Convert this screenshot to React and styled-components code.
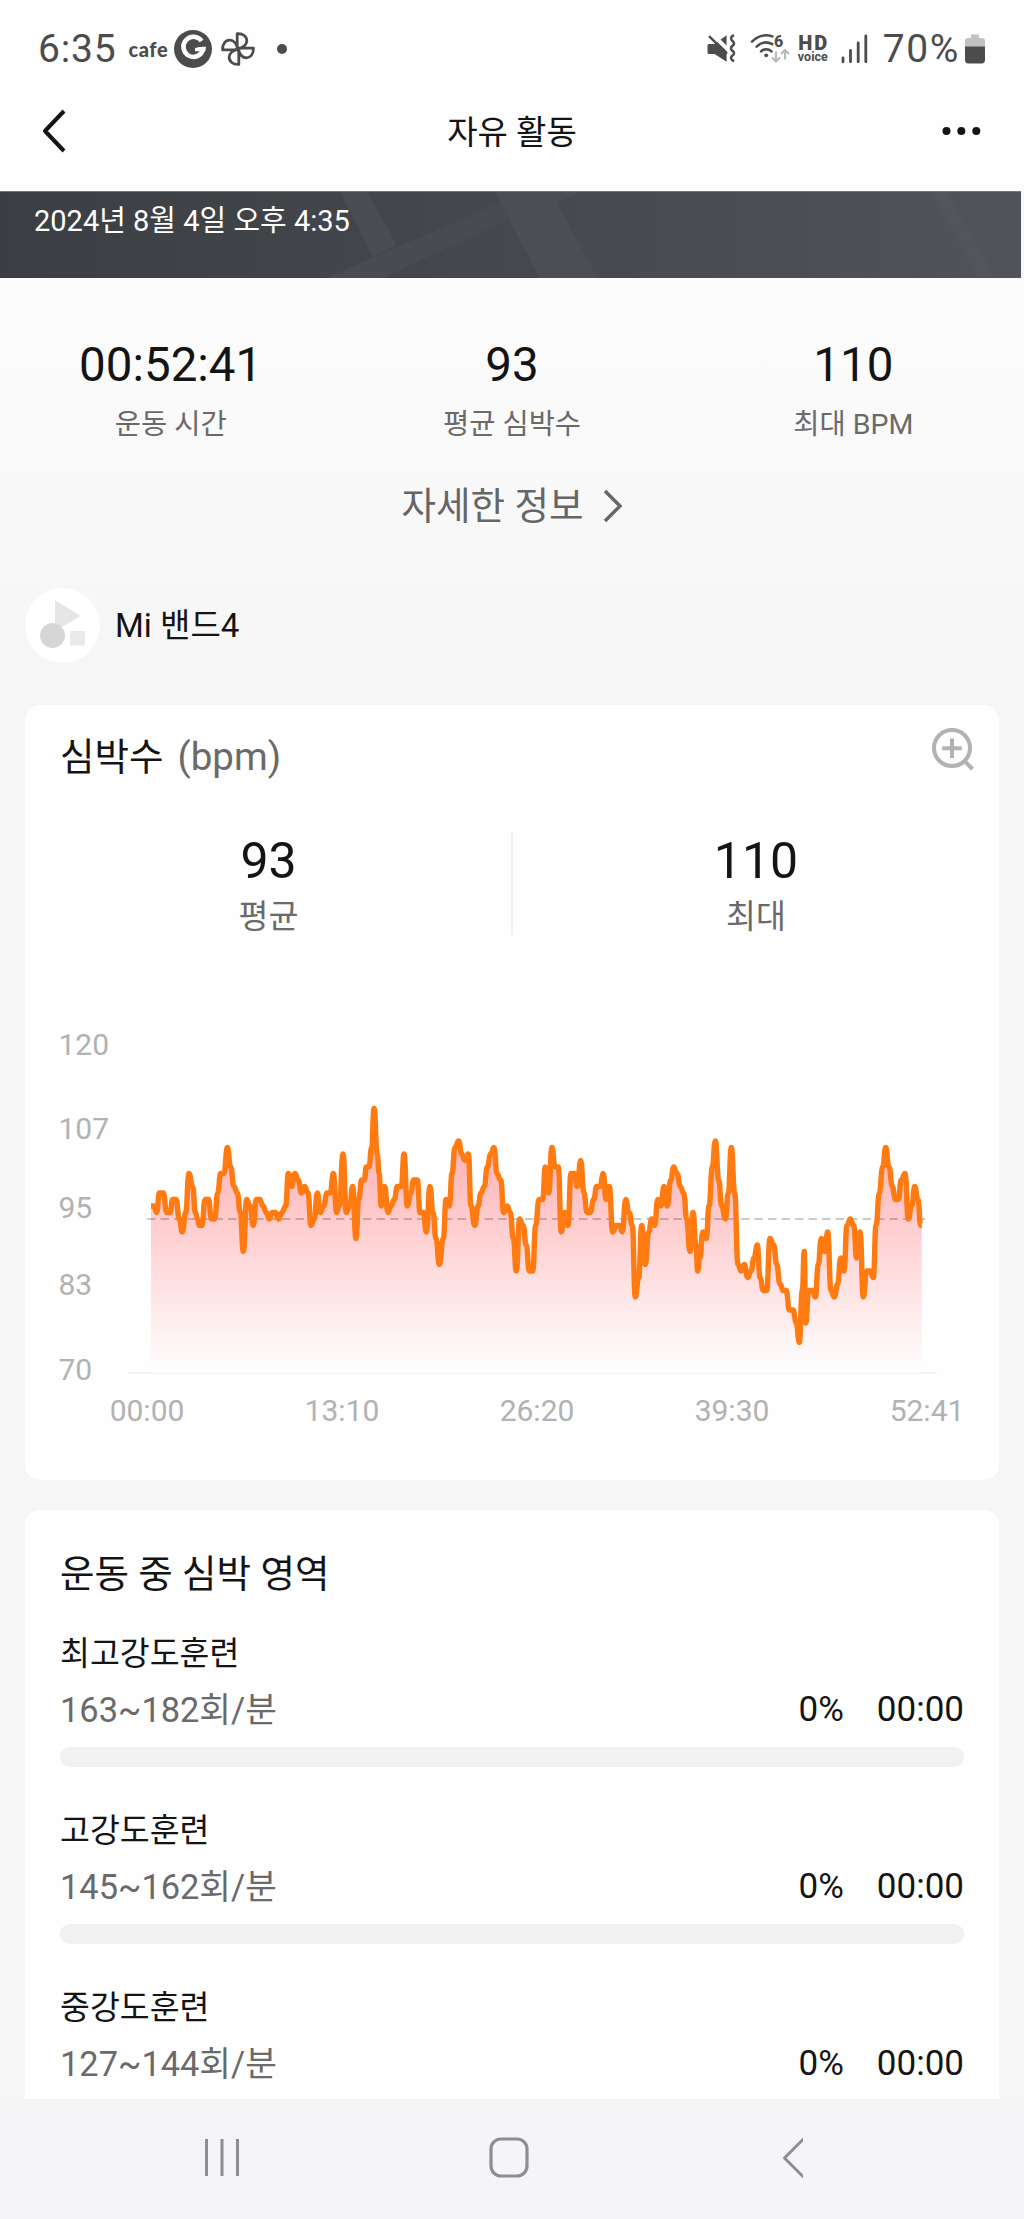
import React from 'react';
import styled, { createGlobalStyle } from 'styled-components';

const GlobalStyle = createGlobalStyle`
  * {
    box-sizing: border-box;
  }
  body {
    margin: 0;
    background: #f6f6f6;
    font-family: Roboto, 'Noto Sans CJK KR', sans-serif;
    color: #141414;
  }
  svg {
    display: block;
    flex: none;
  }
`;

const Screen = styled.div`
  width: 1024px;
  height: 2219px;
  display: flex;
  flex-direction: column;
  overflow: hidden;
`;

const StatusBar = styled.div`
  flex: none;
  display: flex;
  align-items: center;
  justify-content: space-between;
  height: 82px;
  padding: 16px 39px 0 38px;
  background: #fefefe;
  color: #4c4c4c;
`;

const StatusGroup = styled.div`
  display: flex;
  align-items: center;
`;

const StatusText = styled.span`
  font-size: 39px;
  line-height: 46px;
  letter-spacing: ${props => props.$spacing};
`;

const CafeText = styled.span`
  margin: 0 6px 0 12px;
  font-family: Lato, sans-serif;
  font-size: 20px;
  font-weight: 900;
  line-height: 24px;
  letter-spacing: 0.6px;
`;

const StatusDot = styled.span`
  width: 10px;
  height: 10px;
  margin-left: 21px;
  border-radius: 50%;
  background: currentColor;
`;

const HdVoice = styled.div`
  display: flex;
  flex-direction: column;
  align-items: center;
  width: 32px;
  margin: 0 12px 0 7px;
  font-weight: 900;
`;

const HdTop = styled.span`
  font-size: 20px;
  line-height: 16px;
  letter-spacing: 2px;
  margin-right: -2px;
`;

const HdBottom = styled.span`
  font-size: 12.5px;
  font-weight: 700;
  line-height: 12px;
`;

const TitleBar = styled.header`
  flex: none;
  display: grid;
  grid-template-columns: 60px 1fr 60px;
  align-items: center;
  height: 109px;
  padding: 0 40px 11px;
  background: #fefefe;
`;

const Title = styled.h1`
  margin: 3px 0 0;
  text-align: center;
  font-size: 33px;
  font-weight: 400;
  line-height: 40px;
`;

const MapBanner = styled.div`
  position: relative;
  flex: none;
  width: 1021px;
  height: 87px;
  padding: 9px 34px;
  overflow: hidden;
  border-top: 1px solid #77797b;
  background: linear-gradient(90deg, #3b3e42, #44474b 45%, #505458);
  color: #fff;
  font-size: 29px;
  line-height: 40px;
`;

const MapRoads = styled.svg`
  position: absolute;
  left: 0;
  top: -1px;
`;

const BannerDate = styled.span`
  position: relative;
`;

const Content = styled.main`
  flex: 1;
  min-height: 0;
  overflow: hidden;
  background: linear-gradient(#fcfcfc, #f6f6f6 400px);
`;

const Summary = styled.div`
  display: grid;
  grid-template-columns: repeat(3, 1fr);
  padding-top: 59px;
`;

const Stat = styled.div`
  display: flex;
  flex-direction: column;
  align-items: center;
`;

const StatValue = styled.span`
  font-size: ${props => props.$size}px;
  line-height: 56px;
`;

const StatLabel = styled.span`
  margin-top: ${props => props.$gap}px;
  color: #6a6a6a;
  font-size: ${props => props.$size}px;
  line-height: 36px;
`;

const DetailLink = styled.div`
  display: flex;
  align-items: center;
  justify-content: center;
  gap: 20px;
  height: 48px;
  margin-top: 39px;
  padding-left: 1px;
  color: #666;
  font-size: 37.5px;
  line-height: 48px;
`;

const Device = styled.div`
  display: flex;
  align-items: center;
  gap: 15px;
  height: 75px;
  margin: 58px 25px 42px;
  font-size: 33px;
  line-height: 75px;
`;

const Card = styled.section`
  height: ${props => props.$height}px;
  margin: 0 25px 30px;
  border-radius: 15px;
  background: #fefefe;
`;

const CardHeader = styled.div`
  display: flex;
  align-items: flex-start;
  justify-content: space-between;
  height: 127px;
  padding: 22px 24px 0 35px;
`;

const CardTitle = styled.h2`
  margin: 6px 0 0;
  font-size: 37.5px;
  font-weight: 400;
  line-height: 48px;
`;

const Unit = styled.span`
  margin-left: 14px;
  color: #6a6a6a;
  font-size: 38.5px;
`;

const Metrics = styled.div`
  display: grid;
  grid-template-columns: 1fr 1fr;
  height: 99px;
`;

const Metric = styled(Stat)`
  padding-top: 1px;
  & + & {
    border-left: 2px solid #f0f0f0;
    margin-left: -1px;
  }
`;

const ChartSvg = styled.svg`
  margin-top: 89px;
  text {
    fill: #b2b2b2;
    font-size: 30px;
  }
`;

const Zones = styled(Card)`
  padding: 40px 35px 0;
`;

const ZonesTitle = styled(CardTitle)`
  margin: 0;
`;

const Zone = styled.div`
  padding-top: ${props => (props.$first ? 36 : 44)}px;
`;

const ZoneName = styled.div`
  font-size: 32.5px;
  line-height: 40px;
`;

const ZoneRow = styled.div`
  display: flex;
  margin-top: 16px;
  font-size: 35px;
  line-height: 40px;
`;

const ZoneRange = styled.span`
  flex: 1;
  color: #6a6a6a;
  font-size: 34.4px;
`;

const ZoneTime = styled.span`
  margin-left: 33px;
`;

const Track = styled.div`
  height: 20px;
  margin-top: 17px;
  border-radius: 10px;
  background: #f1f1f1;
`;

const NavBar = styled.nav`
  flex: none;
  display: flex;
  align-items: center;
  gap: 250px;
  height: 120px;
  padding: 0 0 2px 205px;
  background: #f5f5f7;
`;

// [offset along the axis, bpm]
const samples = [
  [0, 95], [9, 95], [17, 94], [25, 97], [37, 97], [47, 94], [57, 94], [65, 96], [75, 96], [85, 93],
  [94, 91], [104, 94], [114, 100], [125, 98], [133, 94], [140, 93], [145, 92], [153, 92], [162, 96],
  [173, 96], [181, 93], [191, 93], [200, 97], [209, 100], [219, 100], [229, 104], [239, 101],
  [249, 98], [259, 97], [268, 94], [277, 88], [287, 96], [297, 95], [307, 92], [316, 96], [326, 96],
  [336, 95], [346, 94], [355, 93], [364, 94], [373, 94], [383, 93], [393, 94], [404, 95], [412, 100],
  [422, 98], [432, 100], [442, 99], [451, 97], [461, 98], [471, 97], [480, 92], [490, 93], [499, 97],
  [508, 94], [518, 95], [528, 97], [538, 97], [547, 100], [557, 94], [565, 95], [576, 103], [586, 94],
  [596, 95], [605, 98], [615, 90], [623, 96], [632, 99], [640, 99], [646, 101], [654, 101],
  [662, 104], [669, 110], [679, 103], [684, 100], [691, 95], [701, 98], [711, 94], [720, 95],
  [730, 96], [739, 98], [751, 98], [759, 103], [769, 95], [779, 97], [788, 99], [799, 99], [807, 94],
  [817, 94], [826, 91], [837, 98], [846, 94], [855, 90], [865, 86], [877, 90], [885, 96], [895, 95],
  [903, 100], [912, 104], [923, 105], [932, 103], [942, 102], [952, 103], [960, 95], [971, 92],
  [981, 95], [990, 97], [1000, 98], [1009, 101], [1019, 103], [1029, 104], [1038, 100], [1049, 99],
  [1058, 94], [1069, 95], [1078, 94], [1087, 90], [1096, 85], [1106, 93], [1116, 92], [1126, 89],
  [1135, 85], [1145, 85], [1154, 92], [1164, 96], [1175, 96], [1183, 101], [1193, 97], [1203, 104],
  [1212, 101], [1222, 101], [1231, 91], [1241, 94], [1251, 92], [1260, 100], [1270, 100], [1279, 98],
  [1289, 102], [1299, 97], [1308, 94], [1318, 94], [1328, 96], [1337, 98], [1347, 98], [1357, 100],
  [1365, 96], [1375, 98], [1385, 91], [1395, 92], [1406, 92], [1414, 91], [1424, 96], [1434, 94],
  [1444, 92], [1453, 81], [1463, 84], [1472, 92], [1483, 86], [1493, 91], [1502, 93], [1511, 92],
  [1520, 96], [1530, 95], [1539, 98], [1549, 95], [1559, 99], [1568, 101], [1578, 100], [1588, 98],
  [1598, 97], [1607, 93], [1617, 88], [1626, 94], [1635, 89], [1640, 85], [1647, 87], [1655, 91],
  [1666, 90], [1674, 95], [1684, 101], [1693, 105], [1703, 99], [1712, 95], [1723, 93], [1732, 97],
  [1741, 104], [1751, 97], [1761, 86], [1770, 85], [1780, 86], [1790, 84], [1800, 85], [1809, 87],
  [1819, 89], [1827, 84], [1837, 82], [1847, 82], [1857, 90], [1868, 89], [1877, 86], [1887, 83],
  [1897, 82], [1906, 82], [1915, 79], [1926, 79], [1936, 77], [1945, 74], [1954, 82], [1960, 88],
  [1964, 77], [1973, 82], [1983, 82], [1993, 81], [2002, 86], [2011, 90], [2021, 88], [2030, 91],
  [2040, 82], [2050, 81], [2060, 83], [2069, 87], [2079, 85], [2088, 92], [2098, 93], [2108, 92],
  [2117, 87], [2127, 91], [2137, 81], [2147, 85], [2157, 85], [2167, 84], [2175, 92], [2185, 97],
  [2195, 101], [2204, 104], [2214, 101], [2224, 98], [2233, 96], [2242, 96], [2251, 99], [2262, 100],
  [2272, 93], [2282, 95], [2291, 98], [2301, 96], [2309, 92], [2312, 92],
];

const AXIS_Y = 353;
const toX = t => 126 + t / 3;
const toY = bpm => 199 + (93 - bpm) * 6.5;

const linePath = samples
  .map(([t, bpm], idx) => {
    const x = toX(t).toFixed(1);
    const y = toY(bpm).toFixed(1);
    if (idx === 0) return `M${x} ${y}`;
    const [pt, pb] = samples[idx - 1];
    const mid = toX((t + pt) / 2).toFixed(1);
    return `C${mid} ${toY(pb).toFixed(1)} ${mid} ${y} ${x} ${y}`;
  })
  .join('');

const areaPath = `${linePath}V${AXIS_Y}H${toX(0)}Z`;

const yLabels = [
  { label: '120', y: 24 },
  { label: '107', y: 108 },
  { label: '95', y: 187 },
  { label: '83', y: 264 },
  { label: '70', y: 349 },
];

const xLabels = ['00:00', '13:10', '26:20', '39:30', '52:41'];

const stats = [
  { value: '00:52:41', label: '운동 시간' },
  { value: '93', label: '평균 심박수' },
  { value: '110', label: '최대 BPM' },
];

const zones = [
  { name: '최고강도훈련', range: '163~182회/분' },
  { name: '고강도훈련', range: '145~162회/분' },
  { name: '중강도훈련', range: '127~144회/분' },
];

const HeartRateChart = () => (
  <ChartSvg width="974" height="430" viewBox="0 0 974 430">
    <defs>
      <linearGradient id="area" gradientUnits="userSpaceOnUse" x1="0" y1="88" x2="0" y2="350">
        <stop offset="0" stopColor="#ffa5a8" />
        <stop offset="1" stopColor="#fefefe" />
      </linearGradient>
      <clipPath id="plot">
        <rect x="125" y="60" width="773" height="300" />
      </clipPath>
    </defs>
    {yLabels.map(({ label, y }) => (
      <text key={label} x="33.5" y={y + 11}>
        {label}
      </text>
    ))}
    <rect x="103" y={AXIS_Y - 1} width="809" height="2" fill="#f2f2f2" />
    <path d={areaPath} fill="url(#area)" />
    <path d="M122 199H900" stroke="#000" strokeOpacity="0.2" strokeWidth="2" strokeDasharray="8.5 5" />
    <path
      d={linePath}
      fill="none"
      stroke="#ff7a10"
      strokeWidth="5.4"
      strokeLinejoin="round"
      clipPath="url(#plot)"
    />
    {xLabels.map((label, idx) => (
      <text key={label} x={122 + idx * 195} y="401" textAnchor="middle">
        {label}
      </text>
    ))}
  </ChartSvg>
);

const GIcon = () => (
  <svg width="38" height="38" viewBox="-19 -19 38 38">
    <circle r="19" fill="currentColor" />
    <path d="M8.6 -8A10 10 0 1 0 10.2 0H1" fill="none" stroke="#fefefe" strokeWidth="4.6" />
    <circle cx="-0.5" cy="0" r="5.4" fill="currentColor" />
    <path d="M0 -3.5H9" stroke="currentColor" strokeWidth="3" />
    <path d="M2 0.5H12.4" stroke="#fefefe" strokeWidth="3.4" />
  </svg>
);

const PinwheelIcon = () => (
  <svg width="36" height="36" viewBox="-18 -18 36 36">
    {[0, 90, 180, 270].map(angle => (
      <path
        key={angle}
        transform={`rotate(${angle})`}
        d="M-0.8 0V-15.4C5 -15.8 9 -12.4 8.8 -8C8.6 -4.6 5.5 -1.6 0 0"
        fill="none"
        stroke="currentColor"
        strokeWidth="2.8"
        strokeLinejoin="round"
      />
    ))}
  </svg>
);

const VibrateIcon = () => (
  <svg width="30" height="30" viewBox="0 0 30 30">
    <path
      d="M2 10H7.5L19.6 1.2V27.8L7.5 20H2A1.5 1.5 0 0 1 .5 18.5V11.5A1.5 1.5 0 0 1 2 10Z"
      fill="currentColor"
    />
    <path d="M3 -1.8L25 19.5" stroke="#fefefe" strokeWidth="4" />
    <path d="M2 2.2L20 19.6" stroke="currentColor" strokeWidth="2.4" />
    <path
      d="M27 1.2C22.5 3.5 24 5.5 26 7.5S27 10.5 25 12.3S24 15.5 26 17.3S27 20.3 25 22S24 25.5 27 27.6"
      fill="none"
      stroke="currentColor"
      strokeWidth="2.5"
    />
  </svg>
);

const WifiIcon = () => (
  <svg width="40" height="32" viewBox="0 0 40 32">
    <g fill="none" stroke="currentColor" strokeWidth="2.5" strokeLinecap="round">
      <path d="M2 8.6C8 2.5 16 1.4 22.5 3.4" />
      <path d="M6.6 13.6C11.5 8.8 17.5 8.6 22.3 11.2" />
      <path d="M11 18.4C14 15.6 18.5 15.6 21.5 18.4" />
    </g>
    <circle cx="16.2" cy="22.3" r="1.9" fill="currentColor" />
    <text x="24" y="14" fontSize="16" fontWeight="800" fontFamily="Roboto" fill="currentColor">
      6
    </text>
    <g fill="none" stroke="#bbb" strokeWidth="2.2">
      <path d="M26 18.5V28M22 24.5L26 28.5L30 24.5" />
      <path d="M35 26.5V17M31 21L35 17L39 21" />
    </g>
  </svg>
);

const SignalIcon = () => (
  <svg width="27" height="30" viewBox="0 0 27 30">
    <path
      d="M2 24V27.8M9.5 16.5V27.8M17.2 9V27.8M24.8 2V27.8"
      stroke="currentColor"
      strokeWidth="2.8"
      strokeLinecap="round"
    />
  </svg>
);

const BatteryIcon = () => (
  <svg width="20" height="30" viewBox="0 0 20 30">
    <path d="M6 0.5H14V4H17A3 3 0 0 1 20 7V13H0V7A3 3 0 0 1 3 4H6Z" fill="#c2c2c2" />
    <path d="M0 12.6H20V26A3.4 3.4 0 0 1 16.6 29.4H3.4A3.4 3.4 0 0 1 0 26Z" fill="currentColor" />
  </svg>
);

const ZoomInIcon = () => (
  <svg width="44" height="45" viewBox="0 0 44 45" fill="none" stroke="#b2b2b2" strokeWidth="4">
    <circle cx="21" cy="21" r="18" />
    <path d="M21 11.5V31M11.2 21.2H30.8M33 33.5L41.5 42" />
  </svg>
);

const DeviceIcon = () => (
  <svg width="75" height="75" viewBox="0 0 75 75">
    <circle cx="37.5" cy="37.5" r="37.5" fill="#fff" />
    <path d="M30 12.5L56 28L30 43Z" fill="#e6e6e6" />
    <circle cx="27.5" cy="47.5" r="12.5" fill="#d6d6d6" />
    <rect x="45" y="43" width="15" height="14.5" fill="#e9e9e9" />
  </svg>
);

const App = () => (
  <Screen>
    <GlobalStyle />
    <StatusBar>
      <StatusGroup>
        <StatusText $spacing="0.8px">6:35</StatusText>
        <CafeText>cafe</CafeText>
        <GIcon />
        <svg width="8" height="1" />
        <PinwheelIcon />
        <StatusDot />
      </StatusGroup>
      <StatusGroup>
        <VibrateIcon />
        <svg width="13" height="1" />
        <WifiIcon />
        <HdVoice>
          <HdTop>HD</HdTop>
          <HdBottom>voice</HdBottom>
        </HdVoice>
        <SignalIcon />
        <svg width="15" height="1" />
        <StatusText $spacing="1.6px">70%</StatusText>
        <svg width="5" height="1" />
        <BatteryIcon />
      </StatusGroup>
    </StatusBar>

    <TitleBar>
      <svg width="28" height="44" viewBox="0 0 28 44">
        <path d="M24 2L5 22L24 42" fill="none" stroke="#141414" strokeWidth="4" strokeLinejoin="round" />
      </svg>
      <Title>자유 활동</Title>
      <svg width="60" height="10" viewBox="0 0 60 10" fill="#141414">
        <circle cx="22.5" cy="5" r="4" />
        <circle cx="37.3" cy="5" r="4" />
        <circle cx="52.3" cy="5" r="4" />
      </svg>
    </TitleBar>

    <MapBanner>
      <MapRoads width="1021" height="87" viewBox="0 0 1021 87">
        <path d="M340 0H367L397 54L373 66Z" fill="#494c50" />
        <path d="M325 87L500 12L495 0H585L557 11L512 27L383 87Z" fill="#494b51" />
        <path d="M495 0H585L557 11L597 87H540L508 27Z" fill="#4d4e55" />
        <path d="M932 0H947L996 87H978Z" fill="#53555d" />
      </MapRoads>
      <BannerDate>2024년 8월 4일 오후 4:35</BannerDate>
    </MapBanner>

    <Content>
      <Summary>
        {stats.map(({ value, label }) => (
          <Stat key={label}>
            <StatValue $size={47.5}>{value}</StatValue>
            <StatLabel $size={28.5} $gap={14}>
              {label}
            </StatLabel>
          </Stat>
        ))}
      </Summary>
      <DetailLink>
        자세한 정보
        <svg width="20" height="34" viewBox="0 0 20 34">
          <path d="M2 2L17 17L2 32" fill="none" stroke="#666" strokeWidth="3.4" />
        </svg>
      </DetailLink>
      <Device>
        <DeviceIcon />
        <span>Mi 밴드4</span>
      </Device>

      <Card $height={775}>
        <CardHeader>
          <CardTitle>
            심박수<Unit>(bpm)</Unit>
          </CardTitle>
          <ZoomInIcon />
        </CardHeader>
        <Metrics>
          <Metric>
            <StatValue $size={50}>93</StatValue>
            <StatLabel $size={32.5} $gap={10}>
              평균
            </StatLabel>
          </Metric>
          <Metric>
            <StatValue $size={50}>110</StatValue>
            <StatLabel $size={32.5} $gap={10}>
              최대
            </StatLabel>
          </Metric>
        </Metrics>
        <HeartRateChart />
      </Card>

      <Zones $height={700}>
        <ZonesTitle>운동 중 심박 영역</ZonesTitle>
        {zones.map((zone, idx) => (
          <Zone key={zone.name} $first={idx === 0}>
            <ZoneName>{zone.name}</ZoneName>
            <ZoneRow>
              <ZoneRange>{zone.range}</ZoneRange>
              <span>0%</span>
              <ZoneTime>00:00</ZoneTime>
            </ZoneRow>
            <Track />
          </Zone>
        ))}
      </Zones>
    </Content>

    <NavBar>
      <svg width="34" height="40" viewBox="0 0 34 40">
        <path d="M1.5 1V38M17 1V38M32.5 1V38" stroke="#8e8e90" strokeWidth="3" />
      </svg>
      <svg width="40" height="42" viewBox="0 0 40 42">
        <rect x="2" y="2" width="36" height="37" rx="10" fill="none" stroke="#8e8e90" strokeWidth="3.2" />
      </svg>
      <svg width="24" height="42" viewBox="-3 0 24 42">
        <path d="M22 1.5L2.5 21L22 40.5" fill="none" stroke="#8e8e90" strokeWidth="3" strokeLinejoin="round" overflow="visible" />
      </svg>
    </NavBar>
  </Screen>
);

export default App;
